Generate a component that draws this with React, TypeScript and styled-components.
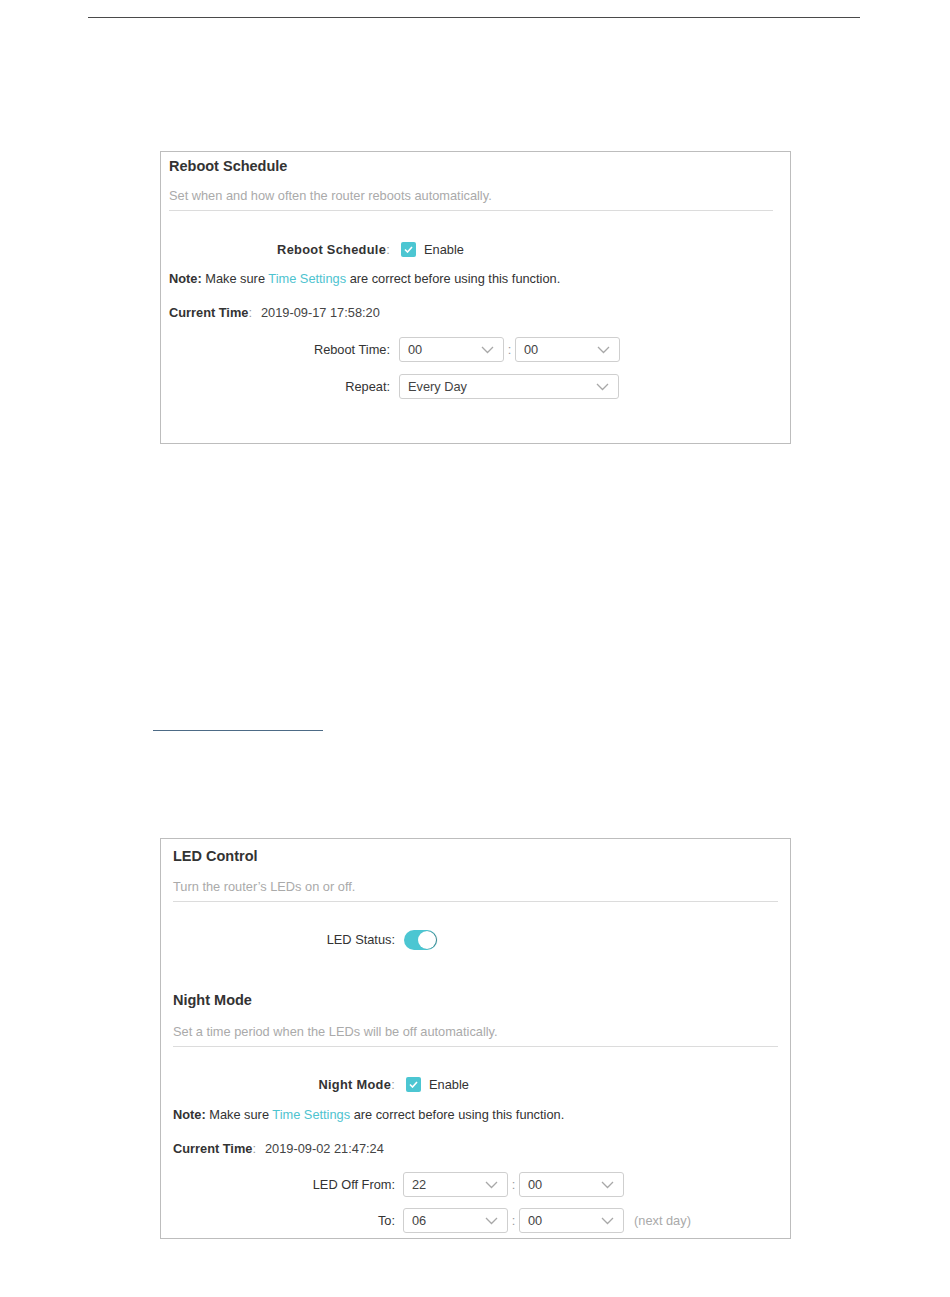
import React from 'react';
import styled, { createGlobalStyle } from 'styled-components';

const GlobalStyle = createGlobalStyle`
  html, body {
    margin: 0;
    padding: 0;
    background: #ffffff;
  }
  body {
    font-family: "Liberation Sans", Arial, sans-serif;
    color: #333333;
  }
`;

const Page = styled.div`
  width: 950px;
  min-height: 1297px;
  padding-top: 17px;
  box-sizing: border-box;
`;

const TopRule = styled.div`
  margin-left: 88px;
  width: 772px;
  height: 1px;
  background: #4a4a4a;
`;

const LinkRule = styled.div`
  margin: 286px 0 0 153px;
  width: 170px;
  height: 1px;
  background: #4d6b86;
`;

const Panel = styled.section<{ $mt: number; $pl: number; $pr: number; $pt: number; $pb: number }>`
  margin: ${(p) => p.$mt}px 0 0 160px;
  width: 631px;
  box-sizing: border-box;
  border: 1px solid #bdbdbd;
  padding: ${(p) => p.$pt}px ${(p) => p.$pr}px ${(p) => p.$pb}px ${(p) => p.$pl}px;
  display: flex;
  flex-direction: column;
`;

const Title = styled.h2<{ $mt?: number }>`
  margin: ${(p) => p.$mt || 0}px 0 0;
  font-size: 14.5px;
  line-height: 20px;
  font-weight: 700;
  color: #333;
`;

const Subtitle = styled.p<{ $mt: number }>`
  margin: ${(p) => p.$mt}px 0 0;
  padding-bottom: 4px;
  border-bottom: 1px solid #dcdcdc;
  font-size: 12.8px;
  line-height: 20px;
  color: #aaaaaa;
`;

const Row = styled.div<{ $mt: number; $h?: number }>`
  margin-top: ${(p) => p.$mt}px;
  height: ${(p) => p.$h || 20}px;
  display: flex;
  align-items: center;
  font-size: 12.8px;
  white-space: nowrap;
`;

const Label = styled.div<{ $w: number; $bold?: boolean }>`
  width: ${(p) => p.$w}px;
  flex: none;
  text-align: right;
  font-weight: ${(p) => (p.$bold ? 700 : 400)};
  letter-spacing: ${(p) => (p.$bold ? '0.3px' : '0')};
  color: #333;
`;

const Colon = styled.span`
  font-weight: 400;
  color: #999;
`;

const Controls = styled.div<{ $gap: number }>`
  margin-left: ${(p) => p.$gap}px;
  display: flex;
  align-items: center;
`;

const Strong = styled.b`
  font-weight: 700;
`;

const Link = styled.span`
  color: #4ec3cf;
`;

const Value = styled.span`
  margin-left: 9px;
  color: #444;
`;

const CheckBox = styled.span`
  width: 15px;
  height: 15px;
  border-radius: 2px;
  background: #4cc6d2;
  display: inline-flex;
  align-items: center;
  justify-content: center;
  margin-right: 8px;
`;

const Select = styled.div<{ $w: number }>`
  width: ${(p) => p.$w}px;
  height: 25px;
  box-sizing: border-box;
  border: 1px solid #cfcfcf;
  border-radius: 3px;
  padding: 0 9px 0 8px;
  display: flex;
  align-items: center;
  justify-content: space-between;
  color: #444;
  font-size: 12.8px;
`;

const Sep = styled.span`
  width: 11px;
  text-align: center;
  color: #999;
`;

const Toggle = styled.span`
  width: 33px;
  height: 20px;
  box-sizing: border-box;
  border-radius: 10px;
  background: #4cc6d2;
  display: flex;
  justify-content: flex-end;
  align-items: center;
  padding: 1px;
`;

const Knob = styled.span`
  width: 18px;
  height: 18px;
  border-radius: 50%;
  background: #fff;
  box-shadow: 1px 0 1px rgba(0, 0, 0, 0.35);
`;

const Hint = styled.span`
  margin-left: 10px;
  color: #aaaaaa;
`;

const Chevron = () => (
  <svg width="13" height="8" viewBox="0 0 13 8">
    <polyline points="1,1 6.5,6.5 12,1" fill="none" stroke="#a8a8a8" strokeWidth="1.3" />
  </svg>
);

const Check = () => (
  <svg width="9" height="7" viewBox="0 0 9 7">
    <polyline points="1,3.5 3.5,6 8,1" fill="none" stroke="#fff" strokeWidth="1.6" />
  </svg>
);

const Dropdown: React.FC<{ value: string; width: number }> = ({ value, width }) => (
  <Select $w={width}>
    <span>{value}</span>
    <Chevron />
  </Select>
);

const TimePair: React.FC<{ h: string; m: string }> = ({ h, m }) => (
  <>
    <Dropdown value={h} width={105} />
    <Sep>:</Sep>
    <Dropdown value={m} width={105} />
  </>
);

const NoteRow: React.FC<{ mt: number }> = ({ mt }) => (
  <Row $mt={mt}>
    <span>
      <Strong>Note:</Strong> Make sure <Link>Time Settings</Link> are correct before using this function.
    </span>
  </Row>
);

const App: React.FC = () => {
  return (
    <Page>
      <GlobalStyle />
      <TopRule />

      <Panel $mt={133} $pl={8} $pr={17} $pt={4} $pb={44}>
        <Title>Reboot Schedule</Title>
        <Subtitle $mt={10}>Set when and how often the router reboots automatically.</Subtitle>
        <Row $mt={28}>
          <Label $w={221} $bold>
            Reboot Schedule<Colon>:</Colon>
          </Label>
          <Controls $gap={11}>
            <CheckBox>
              <Check />
            </CheckBox>
            Enable
          </Controls>
        </Row>
        <NoteRow mt={9} />
        <Row $mt={14}>
          <Strong>Current Time</Strong>
          <Colon>:</Colon>
          <Value>2019-09-17 17:58:20</Value>
        </Row>
        <Row $mt={15} $h={25}>
          <Label $w={221}>Reboot Time:</Label>
          <Controls $gap={9}>
            <TimePair h="00" m="00" />
          </Controls>
        </Row>
        <Row $mt={12} $h={25}>
          <Label $w={221}>Repeat:</Label>
          <Controls $gap={9}>
            <Dropdown value="Every Day" width={220} />
          </Controls>
        </Row>
      </Panel>

      <LinkRule />

      <Panel $mt={107} $pl={12} $pr={12} $pt={7} $pb={5}>
        <Title>LED Control</Title>
        <Subtitle $mt={11}>Turn the router&rsquo;s LEDs on or off.</Subtitle>
        <Row $mt={27} $h={21}>
          <Label $w={222}>LED Status:</Label>
          <Controls $gap={9}>
            <Toggle>
              <Knob />
            </Toggle>
          </Controls>
        </Row>
        <Title $mt={40}>Night Mode</Title>
        <Subtitle $mt={12}>Set a time period when the LEDs will be off automatically.</Subtitle>
        <Row $mt={27}>
          <Label $w={222} $bold>
            Night Mode<Colon>:</Colon>
          </Label>
          <Controls $gap={11}>
            <CheckBox>
              <Check />
            </CheckBox>
            Enable
          </Controls>
        </Row>
        <NoteRow mt={10} />
        <Row $mt={14}>
          <Strong>Current Time</Strong>
          <Colon>:</Colon>
          <Value>2019-09-02 21:47:24</Value>
        </Row>
        <Row $mt={14} $h={25}>
          <Label $w={222}>LED Off From:</Label>
          <Controls $gap={8}>
            <TimePair h="22" m="00" />
          </Controls>
        </Row>
        <Row $mt={11} $h={25}>
          <Label $w={222}>To:</Label>
          <Controls $gap={8}>
            <TimePair h="06" m="00" />
            <Hint>(next day)</Hint>
          </Controls>
        </Row>
      </Panel>
    </Page>
  );
};

export default App;
